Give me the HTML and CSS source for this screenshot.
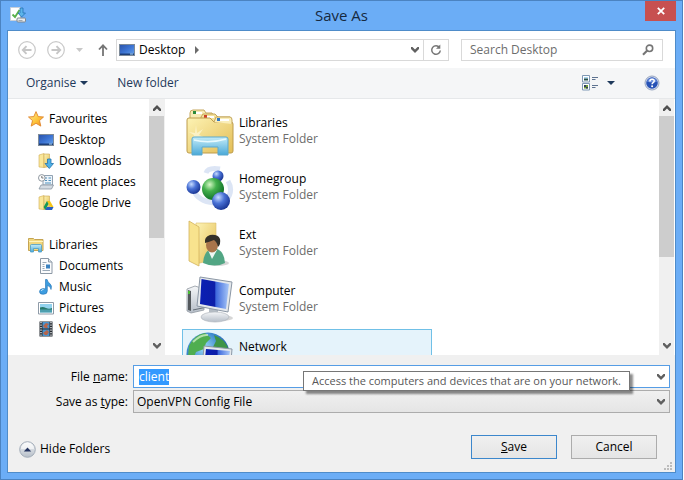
FILE: index.html
```html
<!DOCTYPE html>
<html lang="en">
<head>
<meta charset="utf-8">
<title>Save As</title>
<link rel="stylesheet" href="styles.css">
</head>
<body>
<svg class="defs" aria-hidden="true">
  <defs>
    <linearGradient id="screen" x1="0" y1="0" x2="1" y2="1"><stop offset="0" stop-color="#2a52a8"/><stop offset=".5" stop-color="#3c74d4"/><stop offset="1" stop-color="#6aa6ec"/></linearGradient>
    <linearGradient id="folder" x1="0" y1="0" x2="1" y2="1"><stop offset="0" stop-color="#fdf3b4"/><stop offset="1" stop-color="#e3bd55"/></linearGradient>
    <linearGradient id="glass" x1="0" y1="0" x2="0" y2="1"><stop offset="0" stop-color="#c4ecf8"/><stop offset="1" stop-color="#4aa9d8"/></linearGradient>
    <linearGradient id="starfill" x1="0" y1="0" x2="1" y2="1"><stop offset="0" stop-color="#fff0a0"/><stop offset=".55" stop-color="#fdc63c"/><stop offset="1" stop-color="#f08a1c"/></linearGradient>
    <radialGradient id="blueball" cx=".35" cy=".3" r=".75"><stop offset="0" stop-color="#c6dcff"/><stop offset=".45" stop-color="#4a72d6"/><stop offset="1" stop-color="#16318f"/></radialGradient>
    <radialGradient id="greenball" cx=".35" cy=".3" r=".75"><stop offset="0" stop-color="#d4f7c4"/><stop offset=".4" stop-color="#43b04c"/><stop offset="1" stop-color="#0b6a24"/></radialGradient>
    <radialGradient id="globe" cx=".4" cy=".35" r=".7"><stop offset="0" stop-color="#9fdcf8"/><stop offset=".55" stop-color="#3b86cc"/><stop offset="1" stop-color="#1c4a90"/></radialGradient>
    <linearGradient id="monitor" x1="0" y1="0" x2="1" y2="0"><stop offset="0" stop-color="#0a1fb4"/><stop offset=".5" stop-color="#0d1ea8"/><stop offset=".55" stop-color="#3d68dc"/><stop offset="1" stop-color="#a9c8f8"/></linearGradient>
    <linearGradient id="metal" x1="0" y1="0" x2="0" y2="1"><stop offset="0" stop-color="#f4f6f8"/><stop offset="1" stop-color="#b6bec8"/></linearGradient>
    <symbol id="i-desktop" viewBox="0 0 16 16"><rect x=".5" y="2.500" width="15" height="11" fill="url(#screen)" stroke="#7e8b99"/><path d="M1 11.500h14v1.500H1z" fill="#1d3e78"/><path d="M11 12h3" stroke="#a8d4f4"/></symbol>
    <symbol id="i-folder" viewBox="0 0 16 16"><path d="M1 2l5-1.500v14L1 14z" fill="#fae79a" stroke="#d0ac54" stroke-width=".6"/><path d="M6 1h5.500v12.500L6 14.500z" fill="url(#folder)" stroke="#caa550" stroke-width=".6"/></symbol>
    <symbol id="i-lib" viewBox="0 0 16 16"><path d="M.5 3.500v-2h5l1 1h8.500v11H.5z" fill="#f1d77e" stroke="#c5a452"/><path d="M1 4.500h14" stroke="#fff4bd"/><path d="M2.500 15V8.500q0-1 1-1h9q1 0 1 1V15h-3v-3.500h-5V15z" fill="url(#glass)" stroke="#4b9cc6" stroke-width=".8"/></symbol>
    <symbol id="chev-down" viewBox="0 0 8 6"><path d="M0 0h1.500L4 2.600 6.500 0H8v2L4 6 0 2z" fill="#606060"/></symbol>
    <symbol id="chev-up" viewBox="0 0 8 6"><path d="M0 6h1.500L4 3.400 6.500 6H8V4L4 0 0 4z" fill="#505050"/></symbol>
  </defs>
</svg>
<div class="window">
  <header class="titlebar">
    <svg class="icon" viewBox="0 0 16 16"><path d="M.5.500h10v13H.5z" fill="#fff" stroke="#c8d0da"/><path d="M2.500 7.500L5 10l4.500-7" fill="none" stroke="#58b04a" stroke-width="1.800"/><path d="M10 1h3v5h2.500L11.500 10 8 6h2z" fill="#5cb4ea" stroke="#2372b4" stroke-width=".8"/><rect x="7" y="11" width="8.500" height="4" rx="1" fill="#e8ebee" stroke="#7e8790"/><path d="M8.500 13.500h4" stroke="#a1a8af"/></svg>
    <h1 class="title">Save As</h1>
    <button class="close" aria-label="Close"><svg viewBox="0 0 8 8" width="8" height="8"><path d="M.8.800l6.400 6.400M7.200.800L.8 7.200" stroke="#fff" stroke-width="1.800"/></svg></button>
  </header>
  <main class="client">
    <nav class="navrow">
      <button class="round" aria-label="Back"><svg viewBox="0 0 18 18" width="18" height="18"><circle cx="9" cy="9" r="8.300" fill="none" stroke="#c9c9c9" stroke-width="1.200"/><path d="M13.500 9H5M8.500 5.200L4.800 9l3.700 3.800" fill="none" stroke="#c6c6c6" stroke-width="1.900"/></svg></button>
      <button class="round" aria-label="Forward"><svg viewBox="0 0 18 18" width="18" height="18"><circle cx="9" cy="9" r="8.300" fill="none" stroke="#c9c9c9" stroke-width="1.200"/><path d="M4.500 9H13M9.500 5.200L13.200 9l-3.700 3.800" fill="none" stroke="#c6c6c6" stroke-width="1.900"/></svg></button>
      <button class="recent" aria-label="Recent locations"><svg viewBox="0 0 7 4" width="7" height="4"><path d="M0 0h7L3.500 4z" fill="#c8c8c8"/></svg></button>
      <button class="up" aria-label="Up"><svg viewBox="0 0 10 12" width="10" height="12"><path d="M5 12V2M1 5.500L5 1.300l4 4.200" fill="none" stroke="#757575" stroke-width="1.800"/></svg></button>
      <div class="address">
        <svg class="icon"><use href="#i-desktop"/></svg>
        <a class="crumb" href="#">Desktop</a>
        <svg class="sep" viewBox="0 0 4 8" width="4" height="8"><path d="M0 0l4 4-4 4z" fill="#6b6b6b"/></svg>
        <button class="drop" aria-label="Previous locations"><svg width="8" height="6"><use href="#chev-down"/></svg></button>
        <button class="refresh" aria-label="Refresh"><svg viewBox="0 0 12 12" width="12" height="12"><path d="M9.500 3.500A4.300 4.300 0 1 0 10.300 6.500" fill="none" stroke="#757575" stroke-width="1.500"/><path d="M10.300.500v4.300H6z" fill="#757575"/></svg></button>
      </div>
      <label class="search"><input type="search" placeholder="Search Desktop" aria-label="Search Desktop"><svg viewBox="0 0 12 12" width="12" height="12"><circle cx="7.500" cy="4.300" r="3.200" fill="none" stroke="#757575" stroke-width="1.600"/><path d="M5 6.800L1 10.800" stroke="#757575" stroke-width="2.200"/></svg></label>
    </nav>
    <div class="toolbar">
      <button class="tool">Organise <svg viewBox="0 0 8 4" width="8" height="4"><path d="M0 0h8L4 4z" fill="#1e395b"/></svg></button>
      <button class="tool">New folder</button>
      <button class="tool view" aria-label="Change your view"><svg viewBox="0 0 16 16" width="16" height="16"><path d="M.5.500h7v6.500h-7zM.5 8.500h7V15h-7z" fill="#fff" stroke="#7f98b5"/><path d="M2 2h4v1.500H2z" fill="#a7d5f0"/><path d="M2 3.500h4v2H2z" fill="#28524c"/><path d="M2 10h4v3.500H2z" fill="#6f9c34"/><path d="M2 10h2v2h2v1.500H4V12H2z" fill="#30405c"/><path d="M10 2.500h6M10 4.500h3.500M10 10.500h6M10 12.500h3.500" stroke="#5e7390"/></svg><svg viewBox="0 0 8 4" width="8" height="4"><path d="M0 0h8L4 4z" fill="#1e395b"/></svg></button>
      <button class="tool help" aria-label="Help"><svg viewBox="0 0 16 16" width="16" height="16"><circle cx="8" cy="8" r="7" fill="#d9e1f0" stroke="#97a5c0"/><circle cx="8" cy="8" r="5.800" fill="#2752b6"/><path d="M3 6.500a5.300 5.300 0 0 1 10 0q-5 2-10 0z" fill="#6d90dc"/><path d="M5.900 6.400q0-2.100 2.200-2.100t2.100 1.800q0 1-1.100 1.600-1 .6-1 1.500" fill="none" stroke="#fff" stroke-width="1.500"/><circle cx="8.100" cy="11.300" r="1" fill="#fff"/></svg></button>
    </div>
    <div class="panes">
      <aside class="sidebar">
        <ul class="tree">
          <li class="group"><svg class="icon" viewBox="0 0 16 16"><path d="M8 .600l2.200 5 5.300.4-4 3.600 1.300 5.500L8 12.300l-4.800 2.800 1.300-5.500-4-3.600 5.300-.4z" fill="url(#starfill)" stroke="#e0852a" stroke-width=".9"/></svg>Favourites</li>
          <li><svg class="icon"><use href="#i-desktop"/></svg>Desktop</li>
          <li><svg class="icon" viewBox="0 0 16 16"><use href="#i-folder"/><path d="M9.500 6h3.500v4.500h2.500l-4.200 5-4.300-5h2.500z" fill="#4fb1e6" stroke="#2373ad" stroke-width=".8"/></svg>Downloads</li>
          <li><svg class="icon" viewBox="0 0 16 16"><path d="M5 1.500h9.500v9.500H5z" fill="#edf4fa" stroke="#91a1b1"/><path d="M7 4h2M10.500 4H13M7 6.500h2M10.500 6.500H13M7 9h6" stroke="#4e91bd"/><path d="M3 11h12.500l-2 4H1z" fill="#d4dbe2" stroke="#8895a1" stroke-width=".8"/><circle cx="3.800" cy="3.900" r="3.300" fill="#fff" stroke="#8e979f"/><path d="M3.800 2v2h1.700" fill="none" stroke="#555" stroke-width=".8"/></svg>Recent places</li>
          <li><svg class="icon" viewBox="0 0 16 16"><use href="#i-folder"/><path d="M9 6h3l3.500 6h-3z" fill="#f5c518"/><path d="M9 6l1.500 3-3.300 6L5.600 12z" fill="#159957"/><path d="M8.700 12h6.800L14 15H7.200z" fill="#275fc4"/></svg>Google Drive</li>
        </ul>
        <ul class="tree">
          <li class="group"><svg class="icon"><use href="#i-lib"/></svg>Libraries</li>
          <li><svg class="icon" viewBox="0 0 16 16"><path d="M2.500.500h8l3.500 3.500v11.500H2.500z" fill="#fbfcfd" stroke="#8c98a5"/><path d="M10.500.500V4H14" fill="#dfe6ec" stroke="#8c98a5"/><path d="M4.500 4.500h4M4.500 6.500h2M4.500 8.500h2M4.500 10.500h2M4.500 12.500h7.500" stroke="#9aa9b7"/><path d="M8 6.500h4v4H8z" fill="#3b82c0"/></svg>Documents</li>
          <li><svg class="icon" viewBox="0 0 16 16"><path d="M7.500.500h1.600q.4 2.500 2.700 4 2.600 2 1.200 6-.2-3.200-3.700-4V12q0 3.300-4 3.300-3.800 0-3.800-2.600 0-2.900 4-3.100 1.300 0 2 .4z" fill="#3d9de0" stroke="#1e6eb1" stroke-width=".6"/><path d="M3 12q.5-1.500 2.500-1.500" fill="none" stroke="#c1e6fa"/></svg>Music</li>
          <li><svg class="icon" viewBox="0 0 16 16"><path d="M.5 2.500h15v11.500H.5z" fill="#fff" stroke="#8f9ba8"/><path d="M2 4h12v8.500H2z" fill="#92d2ee"/><path d="M2 7.500q3-1 6 .5t6 0v2H2z" fill="#26786b"/><path d="M2 9.500h12v3H2z" fill="#4d9fae"/></svg>Pictures</li>
          <li><svg class="icon" viewBox="0 0 16 16"><path d="M1.500.500h13v15h-13z" fill="#252a30"/><path d="M4.500 1h7v6.500h-7zM4.500 8.500h7V15h-7z" fill="#4b93cd"/><path d="M5 5l3-3 3 1-2 2 1 2H7zM5 12l4-3 2 2-2 3H7z" fill="#b5654b"/><path d="M3 1v14M13 1v14" stroke="#eef2f4" stroke-width="1.300" stroke-dasharray="1.300 1.200"/></svg>Videos</li>
        </ul>
      </aside>
      <div class="scroll side-scroll"><svg width="8" height="6"><use href="#chev-up"/></svg><div class="track"><div class="thumb"></div></div><svg width="8" height="6"><use href="#chev-down"/></svg></div>
      <ul class="files">
        <li class="file"><svg class="big" viewBox="0 0 48 48"><path d="M4 5q0-3 3-3h11l2 3h6l2 4h-8L4 14z" fill="#f7ebb4" stroke="#c4a65c"/><path d="M15 9l2-3h12l3 3h12v10H15z" fill="#f5e29b" stroke="#c4a65c"/><path d="M7 4h9v2H7zM18 8h10v2H18z" fill="#fff"/><path d="M7 3h3v3H7z" fill="#2b8a3a"/><path d="M18 7h3v3h-3z" fill="#cc402a"/><path d="M1 12q0-2 2-2h21l4 4h17q2 0 2 2v27q0 2-2 2H3q-2 0-2-2z" fill="url(#folder)" stroke="#bd9c4c"/><path d="M28 14l2-5h14q2 0 2 3v4" fill="#faeeb9" stroke="#c4a65c"/><path d="M31 11h12v2H31z" fill="#fff"/><path d="M31 10h3v3h-3z" fill="#2f77c4"/><path d="M10 17l1 8 6-4-4 6 7 3-9-1-5 6 2-8-5-3 6 1z" fill="#fffce5" opacity=".6"/><path d="M6 47V31q0-2 2-2h32q2 0 2 2v16H32v-8H16v8z" fill="url(#glass)" stroke="#5aa9ce"/><path d="M8 32q15 4 32-1" fill="none" stroke="#e8fafe" stroke-width="1.500"/></svg><p class="name">Libraries</p><p class="kind">System Folder</p></li>
        <li class="file"><svg class="big" viewBox="0 0 48 48"><path d="M20 9q2-6 14-4M42 17q6 10-2 20M8 27q4 10 20 12" fill="none" stroke="#d3def3" stroke-width="5" opacity=".8"/><circle cx="32" cy="12" r="5.500" fill="url(#blueball)"/><circle cx="7.500" cy="23" r="7" fill="url(#blueball)"/><circle cx="27" cy="25" r="11" fill="url(#greenball)"/><circle cx="35" cy="37" r="9" fill="url(#blueball)"/></svg><p class="name">Homegroup</p><p class="kind">System Folder</p></li>
        <li class="file"><svg class="big" viewBox="0 0 48 48"><path d="M10 3h20v36l-20 5z" fill="url(#folder)" stroke="#d9bd6b" stroke-width=".6"/><path d="M3 1l10 6v39L3 41z" fill="#f8e38e" stroke="#d3b35e" stroke-width=".8"/><ellipse cx="32" cy="43" rx="11" ry="3" fill="#999" opacity=".4"/><path d="M17 43q1-12 8-14h6q7 2 8 14-10 5-22 0z" fill="#52a684"/><path d="M22 30l4 9 5-9z" fill="#eef7f3"/><ellipse cx="26" cy="25" rx="6" ry="7.500" fill="#a9744a"/><path d="M19 23q-1-6 5-8 8-1 10 4 1 5-2 8-1-5-4-7-5 2-9 3z" fill="#343029"/></svg><p class="name">Ext</p><p class="kind">System Folder</p></li>
        <li class="file"><svg class="big" viewBox="0 0 48 48"><path d="M1 13l8-3 9 3v21L5 37l-4-2z" fill="url(#metal)" stroke="#8f979f" stroke-width=".8"/><path d="M2 14l3 1v20l-3-1z" fill="#53585c"/><path d="M2 15h2v3H2z" fill="#4abd34"/><path d="M7 34l14-3" stroke="#646e78"/><ellipse cx="36" cy="42" rx="11" ry="3" fill="#999" opacity=".4"/><path d="M23 32l9 1v7h-9z" fill="#b4bcc4"/><ellipse cx="29" cy="41" rx="14" ry="5" fill="url(#metal)" stroke="#b1b8be" stroke-width=".7"/><path d="M14 1l32 5-4 30-31-6z" fill="#e4e8ec" stroke="#8b97a5"/><path d="M15.500 3l27.500 5-3 25-26-5z" fill="url(#monitor)"/></svg><p class="name">Computer</p><p class="kind">System Folder</p></li>
        <li class="file hot"><svg class="big" viewBox="0 0 48 48"><circle cx="22" cy="22" r="21.500" fill="url(#globe)"/><path d="M3 14Q8 3 19 1l6 5-5 5-2 6-8 3-4 10-4-5z" fill="#4fae50"/><path d="M28 3q11 4 15 15l-9 4-7-7 3-6z" fill="#3f9447"/><path d="M7 10q8-8 15-7" fill="none" stroke="#dff7d4" stroke-width="2" opacity=".7"/><path d="M18 14l28 3-2 25-28-4z" fill="#e4e8ec" stroke="#8b97a5"/><path d="M20 17l24 2-3 20-23-4z" fill="url(#monitor)"/></svg><p class="name">Network</p></li>
      </ul>
      <div class="scroll main-scroll"><svg width="8" height="6"><use href="#chev-up"/></svg><div class="track"><div class="thumb"></div></div><svg width="8" height="6"><use href="#chev-down"/></svg></div>
    </div>
    <form class="footer">
      <div class="field">
        <label for="fname">File <u>n</u>ame:</label>
        <div class="combo"><input id="fname" type="text" value="client" autocomplete="off"><svg width="8" height="6"><use href="#chev-down"/></svg>
          <div class="tip" role="tooltip">Access the computers and devices that are on your network.</div>
        </div>
      </div>
      <div class="field">
        <label for="ftype">Save as <u>t</u>ype:</label>
        <div class="combo"><select id="ftype"><option>OpenVPN Config File</option></select><svg width="8" height="6"><use href="#chev-down"/></svg></div>
      </div>
      <div class="actions">
        <button type="button" class="hide"><svg viewBox="0 0 17 17" width="17" height="17"><circle cx="8.500" cy="8.500" r="7.800" fill="url(#metal)" stroke="#a2acb8"/><path d="M2 8a6.500 6.500 0 0 1 13 0z" fill="#fff" opacity=".6"/><path d="M4.800 10.500h7.400L8.500 6.500z" fill="#24335f"/></svg>Hide Folders</button>
        <button type="button" class="btn primary"><span><u>S</u>ave</span></button>
        <button type="button" class="btn">Cancel</button>
      </div>
      <svg class="grip" viewBox="0 0 8 8" width="8" height="8"><path d="M6 0h2v2H6zM3 3h2v2H3zM6 3h2v2H6zM0 6h2v2H0zM3 6h2v2H3zM6 6h2v2H6z" fill="#bcbcbc"/></svg>
    </form>
  </main>
</div>
<script src="main.js"></script>
</body>
</html>
```
FILE: styles.css
```css
* { box-sizing: border-box; }
body { margin: 0; background: #fff; font: 12px/16px "Open Sans", "Noto Sans", sans-serif; color: #000; }
button, input, select { font: inherit; color: inherit; margin: 0; padding: 0; border: 0; background: none; border-radius: 0; outline: 0; }
svg { display: block; flex: none; }
ul { list-style: none; margin: 0; padding: 0; }
p { margin: 0; }
.defs { position: absolute; width: 0; height: 0; }
.icon { width: 16px; height: 16px; }
.window { display: flex; flex-direction: column; height: 100vh; margin-right: 1px; padding: 0 6px 6px; background: #6badf6; border: 1px solid #4b83c1; }
.titlebar { display: grid; grid-template-columns: 46px 1fr 46px; align-items: start; height: 29px; flex: none; }
.titlebar .icon { margin: 6px 0 0 3px; }
.title { margin: 4px 0 0; font-size: 15px; line-height: 20px; font-weight: 400; text-align: center; color: #16293f; }
.close { display: grid; place-items: center; width: 31px; height: 20px; margin-left: 15px; background: #c75050; }
.client { flex: 1; min-height: 0; display: flex; flex-direction: column; border: 1px solid #4f8cc9; background: #fff; }
.navrow { flex: none; display: flex; align-items: center; height: 37px; padding: 0 12px 0 10px; }
.round { margin-right: 11px; }
.recent { margin-right: 15px; }
.up { margin-right: 8px; }
.address { flex: 1; display: flex; align-items: center; height: 22px; border: 1px solid #d9d9d9; padding-left: 2px; }
.crumb { margin-left: 4px; color: #000; text-decoration: none; }
.sep { margin-left: 10px; }
.drop { margin-left: auto; padding: 4px; }
.refresh { align-self: stretch; display: grid; place-items: center; width: 25px; border-left: 1px solid #d9d9d9; }
.search { width: 202px; display: flex; align-items: center; height: 22px; margin-left: 12px; padding: 0 8px; border: 1px solid #d9d9d9; }
.search input { flex: 1; min-width: 0; appearance: none; }
.search input::placeholder { color: #6d6d6d; opacity: 1; }
.toolbar { flex: none; display: flex; align-items: center; height: 31px; padding: 0 15px 0 18px; background: #f5f6f7; border-bottom: 1px solid #e6e8ea; color: #1e395b; }
.tool { display: flex; align-items: center; gap: 4px; margin-right: 29px; }
.tool.view { gap: 9px; margin-left: auto; }
.tool.help { margin-right: 0; }
.panes { flex: 1; display: flex; min-height: 0; overflow: hidden; }
.sidebar { width: 141px; padding: 9px 0 0 20px; }
.tree { margin-bottom: 21px; }
.tree li { display: flex; align-items: center; gap: 5px; height: 21px; padding-left: 10px; white-space: nowrap; }
.tree .group { padding-left: 0; }
.scroll { display: flex; flex-direction: column; align-items: center; width: 15px; padding: 6px 0; background: #f0f0f0; }
.track { flex: 1; align-self: stretch; margin: 5px 0; }
.thumb { height: 122px; background: #cdcdcd; }
.main-scroll { margin-right: 1px; }
.main-scroll .thumb { height: 141px; }
.files { flex: 1; min-width: 0; overflow: hidden; padding: 6px 0 0 17px; border-left: 1px solid #f0f0f0; }
.file { display: grid; grid-template-columns: 48px 1fr; grid-template-rows: 16px 16px; column-gap: 5px; width: 250px; height: 56px; padding: 9px 3px; border: 1px solid transparent; }
.big { width: 48px; height: 48px; grid-row: 1 / 3; margin-top: -7px; }
.kind { color: #6d6d6d; }
.hot { background: #e5f3fb; border-color: #70c0e7; }
.footer { flex: none; position: relative; padding: 10px 5px 13px; background: #f0f0f0; }
.field { display: grid; grid-template-columns: 115px 1fr; column-gap: 5px; align-items: center; margin-bottom: 2px; }
.field label { text-align: right; }
.combo { position: relative; display: flex; align-items: center; height: 23px; background: #fff; border: 1px solid #569de5; }
.combo input { flex: 1; padding-left: 5px; }
.combo input::selection { background: #3399ff; color: #fff; }
.combo > svg { position: absolute; right: 4px; }
.combo select { flex: 1; height: 100%; appearance: none; padding-left: 3px; background: linear-gradient(#f0f0f0, #e5e5e5); }
.combo:has(select) { border-color: #acacac; }
.tip { position: absolute; z-index: 2; left: 169px; top: 5px; padding: 0 8px; border: 1px solid #767676; background: #fff; color: #575757; font-size: 11px; line-height: 18px; white-space: nowrap; box-shadow: 3px 3px 2px rgba(0, 0, 0, .45); }
.actions { display: flex; align-items: center; margin-top: 22px; padding-right: 13px; }
.hide { display: flex; align-items: center; gap: 4px; margin: 4px auto 0 6px; }
.btn { width: 86px; height: 24px; margin-left: 14px; border: 1px solid #acacac; background: linear-gradient(#f0f0f0, #e5e5e5); }
.primary { border-color: #3c87cc; }
.grip { position: absolute; right: 3px; bottom: 2px; }
```
FILE: main.js
```js
const fileName = document.getElementById('fname');
fileName.focus();
fileName.select();
```
